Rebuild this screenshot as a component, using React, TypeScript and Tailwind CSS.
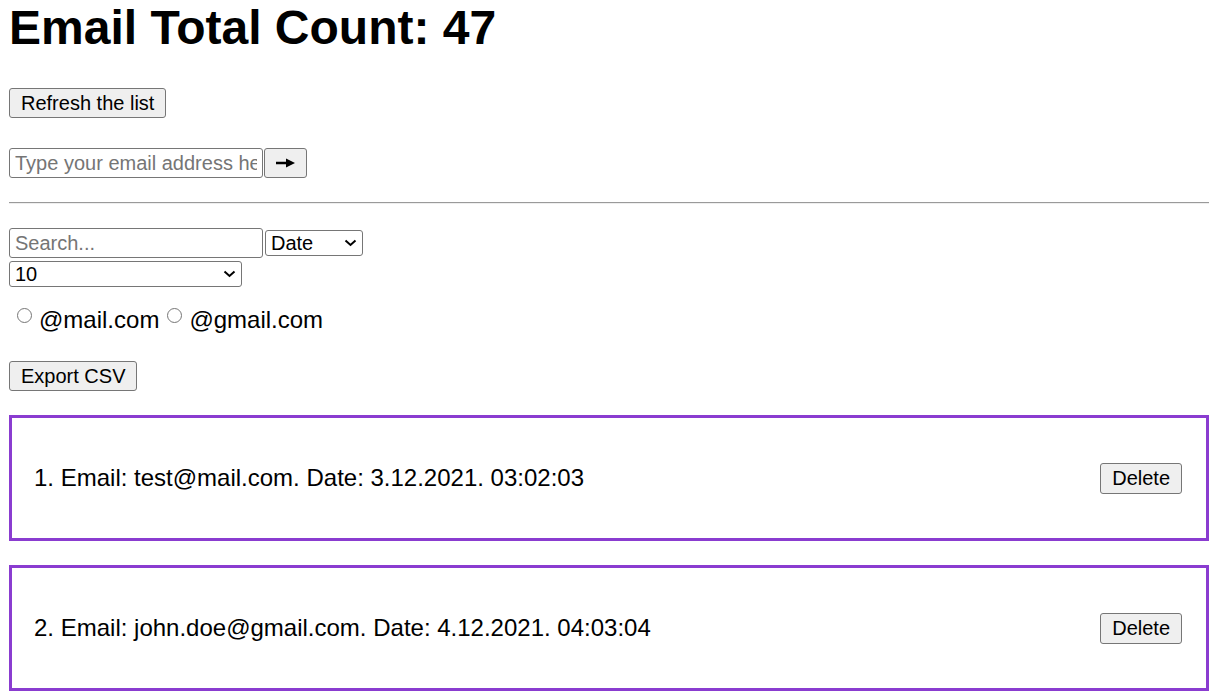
import React from "react";

interface IEmail {
    id: number;
    email: string;
    date: string;
}

const emails: IEmail[] = [
    { id: 1, email: "test@mail.com", date: "3.12.2021. 03:02:03" },
    { id: 2, email: "john.doe@gmail.com", date: "4.12.2021. 04:03:04" },
];

const btn = "border border-[#767676] rounded-[3px] bg-[#efefef] text-[20px] leading-[23px] text-black";

const Chevron = () => (
    <svg width="13" height="8" viewBox="0 0 13 8" className="absolute right-[6px] top-1/2 -translate-y-1/2 pointer-events-none">
        <path d="M1.5 1.5 L6.5 6 L11.5 1.5" fill="none" stroke="#000" strokeWidth="2" />
    </svg>
);

const Select: React.FC<{ width: string; value: string; options: string[] }> = ({ width, value, options }) => (
    <div className={`relative ${width} h-[26px] shrink-0`}>
        <select
            defaultValue={value}
            className="appearance-none w-full h-full border border-[#767676] rounded-[3px] bg-white pl-[5px] text-[20px] leading-[23px] text-black"
        >
            {options.map((o) => (
                <option key={o}>{o}</option>
            ))}
        </select>
        <Chevron />
    </div>
);

const Radio: React.FC<{ label: string }> = ({ label }) => (
    <label className="flex items-start">
        <span className="block shrink-0 w-[15px] h-[15px] rounded-full border border-[#767676] bg-white mt-[2px] ml-[8px] mr-[7px]" />
        <span>{label}</span>
    </label>
);

const Card: React.FC<{ item: IEmail; index: number }> = ({ item, index }) => (
    <div className="h-[126px] border-[3px] border-[#8a3cd0] flex items-center justify-between pl-[22px] pr-[24px]">
        <p className="text-[24px] leading-[28px]">
            {index}. Email: {item.email}. Date: {item.date}
        </p>
        <button className={`${btn} h-[31px] px-[11px]`}>Delete</button>
    </div>
);

export default function App() {
    return (
        <div className="pl-[9px] pr-[16px] bg-white text-black font-['Liberation_Sans',Arial,sans-serif] min-h-[700px]">
            <h1 className="text-[48px] leading-[55px] font-bold mb-[33px]">Email Total Count: 47</h1>

            <div>
                <button className={`${btn} h-[30px] px-[11px]`}>Refresh the list</button>
            </div>

            <div className="flex gap-[1px] mt-[30px]">
                <input
                    type="text"
                    placeholder="Type your email address here"
                    className="w-[254px] h-[30px] border border-[#767676] rounded-[3px] px-[5px] text-[20px] placeholder:text-[#757575]"
                />
                <button className={`${btn} w-[43px] h-[30px] flex items-center justify-center`}>
                    <svg width="19" height="10" viewBox="0 0 19 10">
                        <rect x="0" y="3.75" width="12" height="2.5" fill="#000" />
                        <polygon points="10,0.5 19,5 10,9.5" fill="#000" />
                    </svg>
                </button>
            </div>

            <hr className="mt-[24px] border-t border-b border-t-[#9a9a9a] border-b-[#eeeeee]" />

            <div className="flex items-center gap-[2px] mt-[24px]">
                <input
                    type="text"
                    placeholder="Search..."
                    className="w-[254px] h-[30px] border border-[#767676] rounded-[3px] px-[5px] text-[20px] placeholder:text-[#757575]"
                />
                <Select width="w-[98px]" value="Date" options={["Date", "Email"]} />
            </div>
            <div className="mt-[3px]">
                <Select width="w-[233px]" value="10" options={["10", "20", "50"]} />
            </div>

            <div className="flex mt-[19px] text-[24px] leading-[28px]">
                <Radio label="@mail.com" />
                <Radio label="@gmail.com" />
            </div>

            <div className="mt-[27px]">
                <button className={`${btn} h-[30px] px-[11px]`}>Export CSV</button>
            </div>

            <div className="flex flex-col gap-[24px] mt-[24px]">
                {emails.map((e, i) => (
                    <Card key={e.id} item={e} index={i + 1} />
                ))}
            </div>
        </div>
    );
}
